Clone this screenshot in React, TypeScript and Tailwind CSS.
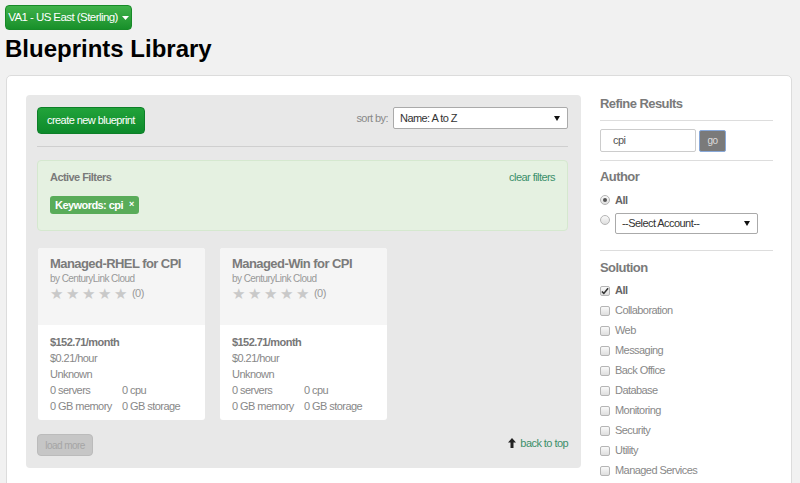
const font = { fontFamily: '"Liberation Sans", Arial, sans-serif' }

interface Blueprint {
  name: string
}

const blueprints: Blueprint[] = [
  { name: "Managed-RHEL for CPI" },
  { name: "Managed-Win for CPI" },
]

const solutions = [
  "Collaboration",
  "Web",
  "Messaging",
  "Back Office",
  "Database",
  "Monitoring",
  "Security",
  "Utility",
  "Managed Services",
]

function Caret() {
  return (
    <svg width="7" height="4" viewBox="0 0 7 4" className="inline-block">
      <path d="M0 0h7L3.5 4z" fill="currentColor" />
    </svg>
  )
}

function SmallCaret() {
  return (
    <svg width="6" height="5" viewBox="0 0 6 5" className="inline-block">
      <path d="M0 0h6L3 5z" fill="#111" />
    </svg>
  )
}

function Stars() {
  return (
    <div className="flex items-center h-[16px]">
      {[0, 1, 2, 3, 4].map((i) => (
        <span key={i} className="text-[15px] leading-none text-[#c9c9c9] w-[16px]">
          ★
        </span>
      ))}
      <span className="text-[11px] text-[#999] ml-[2px]">(0)</span>
    </div>
  )
}

function BlueprintCard({ item }: { item: Blueprint }) {
  return (
    <div className="w-[167px] h-[172px] bg-white rounded-[3px] overflow-hidden flex flex-col">
      <div className="bg-[#f5f5f5] h-[77px] px-[12px] pt-[7px]">
        <div className="text-[13px] font-bold text-[#7b7b7b] leading-[18px] whitespace-nowrap">{item.name}</div>
        <div className="text-[10px] text-[#999] leading-[13px] mt-[-1px]">by CenturyLink Cloud</div>
        <Stars />
      </div>
      <div className="px-[12px] pt-[9px] text-[11px] text-[#888] leading-[16px] whitespace-nowrap">
        <div className="font-bold text-[#777]">$152.71/month</div>
        <div>$0.21/hour</div>
        <div>Unknown</div>
        <div className="flex">
          <span className="w-[72px]">0 servers</span>
          <span>0 cpu</span>
        </div>
        <div className="flex">
          <span className="w-[72px]">0 GB memory</span>
          <span>0 GB storage</span>
        </div>
      </div>
    </div>
  )
}

function Checkbox({ checked }: { checked?: boolean }) {
  return (
    <span className="w-[10px] h-[10px] rounded-[2px] border border-[#b5b5b5] bg-gradient-to-b from-[#fafafa] to-[#dedede] flex items-center justify-center">
      {checked && (
        <svg width="9" height="8" viewBox="0 0 9 8">
          <path d="M1 4.5l2.2 2.2L8 1" stroke="#333" strokeWidth="1.8" fill="none" />
        </svg>
      )}
    </span>
  )
}

function Radio({ checked }: { checked?: boolean }) {
  return (
    <span className="w-[10px] h-[10px] rounded-full border border-[#b5b5b5] bg-gradient-to-b from-[#fafafa] to-[#dedede] flex items-center justify-center">
      {checked && <span className="w-[4px] h-[4px] rounded-full bg-[#555]" />}
    </span>
  )
}

export default function App() {
  return (
    <div style={font} className="min-h-[483px] bg-[#f1f1f1] overflow-hidden tracking-[-0.035em]">
      <div className="pt-[5px] pl-[5px]">
        <button className="h-[25px] w-[127px] rounded-[4px] bg-gradient-to-b from-[#3fb24a] to-[#17902a] border border-[#188a28] text-white text-[11.5px] whitespace-nowrap flex items-center justify-center gap-[4px]">
          VA1 - US East (Sterling) <Caret />
        </button>
        <h1 className="text-[24px] font-bold text-black leading-[28px] mt-[5px] tracking-normal">Blueprints Library</h1>
      </div>

      <div className="ml-[6px] mr-[8px] mt-[12px] bg-white border border-[#dcdcdc] rounded-[5px] h-[430px] pl-[19px] pt-[19px] flex gap-[19px]">
        <div className="w-[555px] h-[373px] bg-[#e8e8e8] rounded-[4px] pl-[11px] pr-[13px] pt-[12px] flex flex-col">
          <div className="flex items-center justify-between">
            <button className="h-[27px] px-[9px] rounded-[4px] bg-gradient-to-b from-[#21a33a] to-[#0c8a2b] border border-[#0d7f28] text-white text-[11px]">
              create new blueprint
            </button>
            <div className="flex items-center gap-[5px] self-start">
              <span className="text-[11px] text-[#888]">sort by:</span>
              <div className="w-[175px] h-[22px] bg-white border border-[#aaa] rounded-[2px] flex items-center justify-between pl-[6px] pr-[7px] text-[11px] text-[#333]">
                <span>Name: A to Z</span>
                <SmallCaret />
              </div>
            </div>
          </div>
          <div className="border-t border-[#cfcfcf] mt-[12px]" />
          <div className="mt-[13px] h-[71px] bg-[#e5f1e1] border border-[#d5e8cf] rounded-[4px] px-[12px] pt-[9px]">
            <div className="flex justify-between text-[11px] leading-[14px]">
              <span className="font-bold text-[#7a7a7a]">Active Filters</span>
              <span className="text-[#3b8f6a]">clear filters</span>
            </div>
            <span className="inline-flex items-center mt-[12px] h-[18px] px-[5px] bg-[#59ac59] rounded-[3px] text-white text-[11px] font-bold gap-[6px]">
              Keywords: cpi <span className="text-[9px]">×</span>
            </span>
          </div>
          <div className="flex gap-[15px] mt-[17px] pl-[1px]">
            {blueprints.map((b) => (
              <BlueprintCard key={b.name} item={b} />
            ))}
          </div>
          <div className="flex justify-between items-start mt-[14px]">
            <button className="h-[22px] w-[56px] rounded-[4px] bg-[#c6c6c6] border border-[#bbb] text-[#a5a5a5] text-[10px]">
              load more
            </button>
            <span className="flex items-center gap-[4px] text-[11px] text-[#3b8f6a] mt-[1px]">
              <svg width="8" height="10" viewBox="0 0 8 10">
                <path d="M4 0L8 4.5H5.5V10h-3V4.5H0z" fill="#222" />
              </svg>
              back to top
            </span>
          </div>
        </div>

        <div className="w-[173px] pt-[1px]">
          <div className="text-[13px] font-bold text-[#7a7a7a] leading-[16px]">Refine Results</div>
          <div className="border-t border-[#ddd] mt-[8px]" />
          <div className="flex items-center gap-[3px] mt-[8px]">
            <div className="w-[96px] h-[23px] border border-[#ccc] rounded-[2px] text-[11px] text-[#555] flex items-center px-[12px]">cpi</div>
            <button className="w-[27px] h-[22px] bg-[#7a7a7a] border border-[#88a8d8] rounded-[2px] text-[10px] text-[#ddd]">go</button>
          </div>
          <div className="border-t border-[#ddd] mt-[8px]" />
          <div className="text-[13px] font-bold text-[#7a7a7a] leading-[16px] mt-[8px]">Author</div>
          <div className="flex items-center gap-[5px] mt-[7px] text-[11px] font-bold text-[#666]">
            <Radio checked /> All
          </div>
          <div className="flex items-start gap-[5px] mt-[4px]">
            <span className="mt-[2px]"><Radio /></span>
            <div className="w-[143px] h-[21px] border border-[#aaa] rounded-[2px] bg-white flex items-center justify-between pl-[6px] pr-[7px] text-[11px] text-[#333]">
              <span>--Select Account--</span>
              <SmallCaret />
            </div>
          </div>
          <div className="border-t border-[#ddd] mt-[16px]" />
          <div className="text-[13px] font-bold text-[#7a7a7a] leading-[16px] mt-[9px]">Solution</div>
          <div className="mt-[5px] flex flex-col">
            <div className="flex items-center gap-[5px] h-[20px] text-[11px] font-bold text-[#666]">
              <Checkbox checked /> All
            </div>
            {solutions.map((s) => (
              <div key={s} className="flex items-center gap-[5px] h-[20px] text-[11px] text-[#888]">
                <Checkbox /> {s}
              </div>
            ))}
          </div>
        </div>
      </div>
    </div>
  )
}
